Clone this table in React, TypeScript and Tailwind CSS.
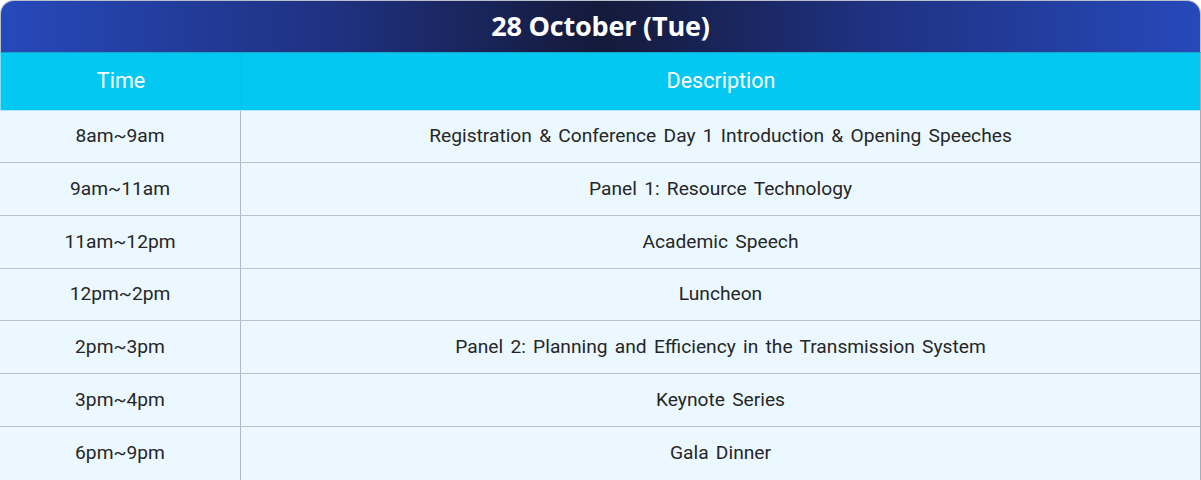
const rows = [
  { time: "8am~9am", desc: "Registration & Conference Day 1 Introduction & Opening Speeches", h: "h-[52px]" },
  { time: "9am~11am", desc: "Panel 1: Resource Technology", h: "h-[53px]" },
  { time: "11am~12pm", desc: "Academic Speech", h: "h-[53px]" },
  { time: "12pm~2pm", desc: "Luncheon", h: "h-[52px]" },
  { time: "2pm~3pm", desc: "Panel 2: Planning and Efficiency in the Transmission System", h: "h-[53px]" },
  { time: "3pm~4pm", desc: "Keynote Series", h: "h-[53px]" },
  { time: "6pm~9pm", desc: "Gala Dinner", h: "h-[54px]" },
];

export default function App() {
  return (
    <div className="w-[1201px] h-[480px] overflow-hidden bg-white font-['Roboto','Noto_Sans',sans-serif]">
      {/* Day title */}
      <div className="h-[52px] pb-[3px] rounded-t-[14px] border-t border-x border-[#b9bfcc] bg-[linear-gradient(90deg,#2649ba_0%,#1f3180_28%,#141a3a_50%,#1f3180_72%,#2649ba_100%)] flex items-center justify-center">
        <h1 className="font-['Open_Sans',sans-serif] font-bold text-white text-[27px] tracking-[-0.2px] leading-none">
          28 October (Tue)
        </h1>
      </div>

      {/* Column headings */}
      <div className="grid grid-cols-[241px_1fr] h-[58px] bg-[#02c8f2] border-t border-[#1aa3c6] border-r border-r-[#a6adb5] border-l border-l-[#7fdcf5] text-white text-[21.5px] [word-spacing:2px]">
        <div className="flex items-center justify-center border-r border-[#35a9c8]">Time</div>
        <div className="flex items-center justify-center">Description</div>
      </div>

      {/* Schedule rows */}
      <div className="bg-[#ebf8ff] border-r border-[#a6adb5]">
        {rows.map((r, i) => (
          <div
            key={i}
            className={`grid grid-cols-[241px_1fr] ${r.h} border-t ${i === 0 ? "border-[#b5e6f5]" : "border-[#b6c2cc]"} text-[19.2px] [word-spacing:2.5px] text-[#262626]`}
          >
            <div className="flex items-center justify-center border-r border-[#b0b8c0]">{r.time}</div>
            <div className="flex items-center justify-center">{r.desc}</div>
          </div>
        ))}
      </div>
    </div>
  );
}
